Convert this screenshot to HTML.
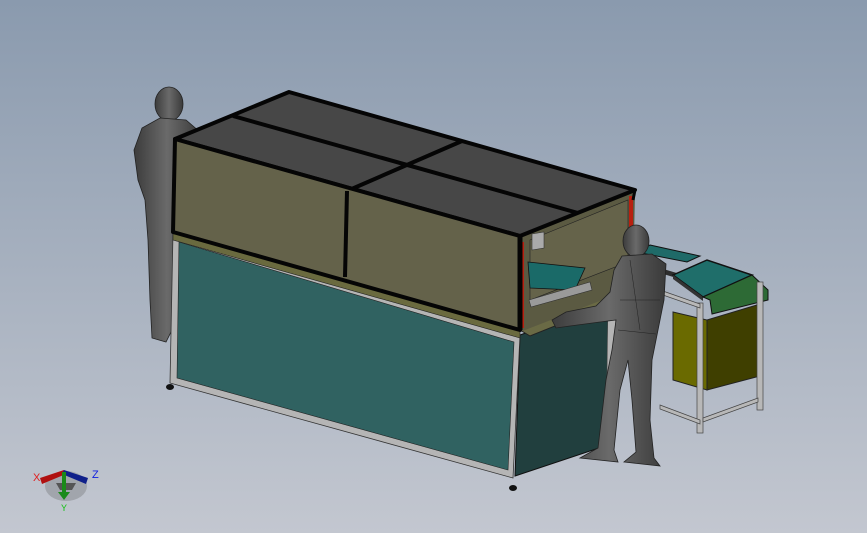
<!DOCTYPE html>
<html><head><style>
html,body{margin:0;padding:0;width:867px;height:533px;overflow:hidden}
svg{display:block}
</style></head><body>
<svg width="867" height="533" viewBox="0 0 867 533" xmlns="http://www.w3.org/2000/svg">
<defs>
<linearGradient id="bg" x1="0" y1="0" x2="0" y2="1">
<stop offset="0" stop-color="#8a9aae"/><stop offset="1" stop-color="#c3c7d0"/>
</linearGradient>
<linearGradient id="man" x1="0" y1="0" x2="1" y2="0">
<stop offset="0" stop-color="#3c3c3c"/><stop offset="0.5" stop-color="#6a6a6a"/><stop offset="1" stop-color="#3a3a3a"/>
</linearGradient>
</defs>
<rect width="867" height="533" fill="url(#bg)"/>

<!-- left person -->
<g fill="url(#man)" stroke="#222" stroke-width="0.8">
<ellipse cx="169" cy="104" rx="14" ry="17"/>
<path d="M160 118 L186 120 L200 132 L195 190 L182 200 L172 330 L166 342 L152 338 L150 300 L148 240 L145 200 L138 180 L134 150 L142 128 Z"/>
</g>

<!-- right conveyor table -->
<g>
<path d="M650 245 L700 256 L687 262 L636 252 Z" fill="#1f6a68" stroke="#111"/>
<path d="M640 262 L700 280 L700 285 L640 267 Z" fill="#2d2d2d"/>
<path d="M673 275 L707 260 L752 275 L703 297 Z" fill="#1f6e6a" stroke="#111" stroke-width="1.5"/>
<path d="M673 275 L703 297 L703 301 L673 279 Z" fill="#333"/>
<path d="M703 297 L752 275 L768 290 L768 300 L712 314 L710 300 Z" fill="#2d6a35" stroke="#111"/>
<path d="M673 312 L707 320 L707 390 L673 380 Z" fill="#6a6a00" stroke="#222"/>
<path d="M707 320 L760 304 L760 376 L707 390 Z" fill="#3f3f00" stroke="#222"/>
<g fill="#b8b8b8" stroke="#444" stroke-width="0.7">
<rect x="697" y="303" width="6" height="130"/>
<rect x="757" y="282" width="6" height="128"/>
<path d="M660 405 L700 420 L700 424 L660 409 Z"/>
<path d="M703 418 L758 398 L758 402 L703 422 Z"/>
<path d="M660 290 L700 304 L700 308 L660 294 Z"/>
</g>
</g>

<!-- lower cabinet right side -->
<path d="M520 335 L610 303 L608 445 L515 476 Z" fill="#213f3e" stroke="#111"/>
<path d="M608 300 L616 302 L614 440 L606 442 Z" fill="#b5b5b5" stroke="#444" stroke-width="0.6"/>
<path d="M520 330 L610 296 L620 300 L530 336 Z" fill="#6a6a45" stroke="#222"/>
<path d="M540 318 L600 292 L612 296 L555 322 Z" fill="#6a6a45"/>

<!-- lower cabinet front -->
<path d="M173 232 L520 335 L513 478 L170 383 Z" fill="#b5b5b5" stroke="#333" stroke-width="0.8"/>
<path d="M179 242 L514 342 L508 470 L177 378 Z" fill="#306261" stroke="#222" stroke-width="0.6"/>
<path d="M173 232 L520 330 L520 338 L173 240 Z" fill="#6a6a3f" stroke="#222" stroke-width="0.6"/>
<ellipse cx="170" cy="387" rx="4" ry="3" fill="#111"/>
<ellipse cx="513" cy="488" rx="4" ry="3" fill="#111"/>

<!-- top box right face (open) -->
<path d="M520 236 L635 190 L633 288 L520 332 Z" fill="#5b5a42"/>
<path d="M530 240 L628 200 L628 262 L530 300 Z" fill="#65634a" stroke="#222" stroke-width="0.6"/>
<path d="M528 262 L585 268 L575 290 L530 288 Z" fill="#1a6a68" stroke="#111" stroke-width="0.8"/>
<path d="M529 300 L590 282 L592 290 L531 307 Z" fill="#9a9a9a" stroke="#333" stroke-width="0.6"/>
<rect x="629" y="196" width="4" height="70" fill="#b82010"/>
<rect x="521" y="242" width="3" height="86" fill="#b82010"/>
<path d="M532 234 L544 232 L544 248 L532 250 Z" fill="#aaa" stroke="#333" stroke-width="0.6"/>

<!-- top box top face -->
<path d="M289 92 L635 190 L520 236 L175 139 Z" fill="#474747" stroke="#050505" stroke-width="4" stroke-linejoin="round"/>
<line x1="233" y1="116" x2="578" y2="213" stroke="#050505" stroke-width="4"/>
<line x1="462" y1="141" x2="347" y2="191" stroke="#050505" stroke-width="4"/>
<path d="M175 139 L520 236 L520 330 L173 232 Z" fill="#64624a" stroke="#050505" stroke-width="4" stroke-linejoin="round"/>
<line x1="347" y1="191" x2="345" y2="277" stroke="#050505" stroke-width="4"/>
<line x1="520" y1="236" x2="520" y2="330" stroke="#050505" stroke-width="5"/>
<line x1="635" y1="190" x2="633" y2="200" stroke="#050505" stroke-width="3"/>

<!-- right person -->
<g fill="url(#man)" stroke="#222" stroke-width="0.8">
<ellipse cx="636" cy="241" rx="13" ry="16"/>
<path d="M622 256 L652 254 L666 264 L664 300 L658 330 L652 360 L650 420 L654 458 L660 466 L624 462 L636 452 L632 400 L628 360 L620 390 L614 450 L618 462 L580 458 L598 448 L606 380 L612 350 L616 320 L600 322 L570 326 L556 328 L552 320 L566 312 L596 306 L610 292 L614 270 Z"/>
</g>
<g stroke="#222" stroke-width="0.5" fill="none">
<path d="M620 300 L660 300 M618 330 L656 334 M630 260 L640 330"/>
</g>

<!-- axis triad -->
<g>
<ellipse cx="66" cy="486" rx="21" ry="15" fill="#9a9ea4" opacity="0.8"/>
<path d="M56 483 L76 483 L72 490 L60 490 Z" fill="#555"/>
<path d="M64 470 L40 478 L42 484 L66 474 Z" fill="#b01010"/>
<path d="M64 470 L88 478 L86 484 L62 474 Z" fill="#10208a"/>
<rect x="62" y="472" width="4" height="22" fill="#1a8a1a"/>
<path d="M58 492 L70 492 L64 500 Z" fill="#1a8a1a"/>
<text x="33" y="481" font-family="Liberation Sans, sans-serif" font-size="11" fill="#e02020">X</text>
<text x="92" y="478" font-family="Liberation Sans, sans-serif" font-size="11" fill="#1020e0">Z</text>
<text x="61" y="511" font-family="Liberation Sans, sans-serif" font-size="9" fill="#10c010">Y</text>
</g>
</svg>
</body></html>
